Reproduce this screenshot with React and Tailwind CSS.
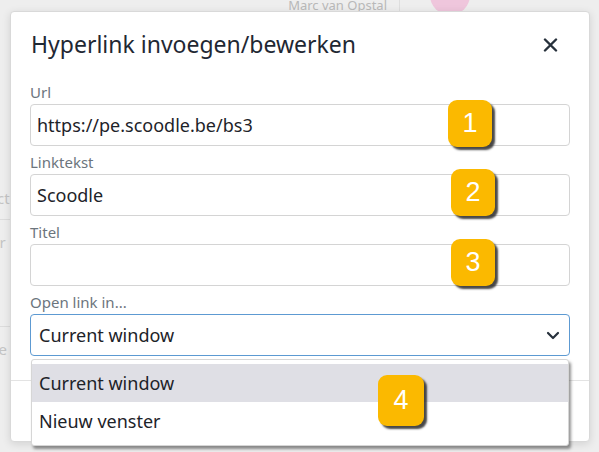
import { useState } from 'react';

// Numbered callouts laid over the dialog
const BADGES = [
  { n: '1', pos: 'left-[448px] top-[100px]' },
  { n: '2', pos: 'left-[451px] top-[169px]' },
  { n: '3', pos: 'left-[451px] top-[239px]' },
];

function Badge({ n, className }) {
  return (
    <div
      className={`absolute w-[44px] h-[47px] rounded-[9px] bg-[#fbb900] shadow-[3px_3px_2px_rgba(40,40,40,0.85)]
                  flex items-center justify-center text-white text-[27px] leading-none font-['Liberation_Sans',Arial,sans-serif] ${className}`}
    >
      {n}
    </div>
  );
}

function Field({ label, value }) {
  return (
    <div className="flex flex-col">
      <label className="h-[20px] leading-[20px] mb-[2px] text-[15px] text-[#6c757d]">{label}</label>
      <div className="h-[42px] rounded-[4px] border border-[#d4d4d4] bg-white px-[6px] flex items-center text-[18px] text-[#1d2329]">
        {value}
      </div>
    </div>
  );
}

export default function App() {
  const [open] = useState(true);

  return (
    <div className="relative w-[599px] h-[452px] overflow-hidden bg-[#eeeeee] font-['Noto_Sans',sans-serif]">
      {/* ── Page behind the backdrop ── */}
      <div className="flex h-[11px]">
        <div className="w-[400px] flex justify-end pr-[12px] text-[13px] leading-[10px] text-[#b9b9b9] border-r border-[#dedede]">
          Marc van Opstal
        </div>
        <div className="ml-[30px] w-[40px] h-[40px] -mt-[25px] rounded-full bg-[#efc6dc]" />
      </div>
      <div className="flex">
        <div className="w-[10px] flex flex-col text-[15px] text-[#c4c4c4] overflow-hidden">
          <div className="h-[165px]" />
          <div className="h-[44px] leading-[44px] -ml-[3px] border-b border-[#dcdcdc]">ct</div>
          <div className="h-[44px] leading-[44px] -ml-[9px]">ar</div>
          <div className="h-[62px]" />
          <div className="h-[44px] leading-[44px] -ml-[9px] border-t border-[#dcdcdc]">ve</div>
        </div>
      </div>

      {/* ── Dialog ── */}
      <div className="absolute left-[10px] top-[11px] w-[580px] h-[431px] bg-white rounded-[4px] border border-[#d9d9d9] shadow-[0_2px_8px_rgba(0,0,0,0.12)] flex flex-col">
        <div className="flex items-center justify-between pl-[20px] pr-[31px] pt-[17px] pb-[23px]">
          <h1 className="text-[23px] leading-[30px] text-[#1f2833]">Hyperlink invoegen/bewerken</h1>
          <svg width="15" height="14" viewBox="0 0 15 14" className="mt-[2px]">
            <path d="M2 1.5 L13 12.5 M13 1.5 L2 12.5" stroke="#27313c" strokeWidth="2.4" strokeLinecap="round" />
          </svg>
        </div>

        <div className="flex flex-col gap-[6px] px-[19px]">
          <Field label="Url" value="https://pe.scoodle.be/bs3" />
          <Field label="Linktekst" value="Scoodle" />
          <Field label="Titel" value="" />

          <div className="relative flex flex-col">
            <label className="h-[20px] leading-[20px] mb-[2px] text-[15px] text-[#6c757d]">Open link in...</label>
            <div className="h-[42px] rounded-[4px] border border-[#5d9ad2] bg-white pl-[8px] pr-[9px] flex items-center justify-between text-[18px] text-[#1d2329]">
              <span>Current window</span>
              <svg width="14" height="9" viewBox="0 0 14 9">
                <path d="M2 2 L7 7 L12 2" fill="none" stroke="#27313c" strokeWidth="2.2" strokeLinecap="round" strokeLinejoin="round" />
              </svg>
            </div>

            {/* open option list */}
            {open && (
              <div className="absolute left-[1px] right-[1px] top-[67px] z-10 bg-white border border-[#d6d6d6] rounded-[3px] pt-[4px] pb-[4px] shadow-[2px_3px_3px_rgba(60,60,60,0.55)] text-[18px] text-[#1d2329]">
                <div className="h-[38px] flex items-center px-[7px] bg-[#dfdfe5]">Current window</div>
                <div className="h-[39px] flex items-center px-[7px]">Nieuw venster</div>
              </div>
            )}
          </div>
        </div>

        <div className="mt-[24px] border-t border-[#e3e3e3]" />
      </div>

      {BADGES.map((b) => (
        <Badge key={b.n} n={b.n} className={b.pos} />
      ))}
      <Badge n="4" className="left-[378px] top-[375px] z-20 w-[46px] h-[51px]" />
    </div>
  );
}
